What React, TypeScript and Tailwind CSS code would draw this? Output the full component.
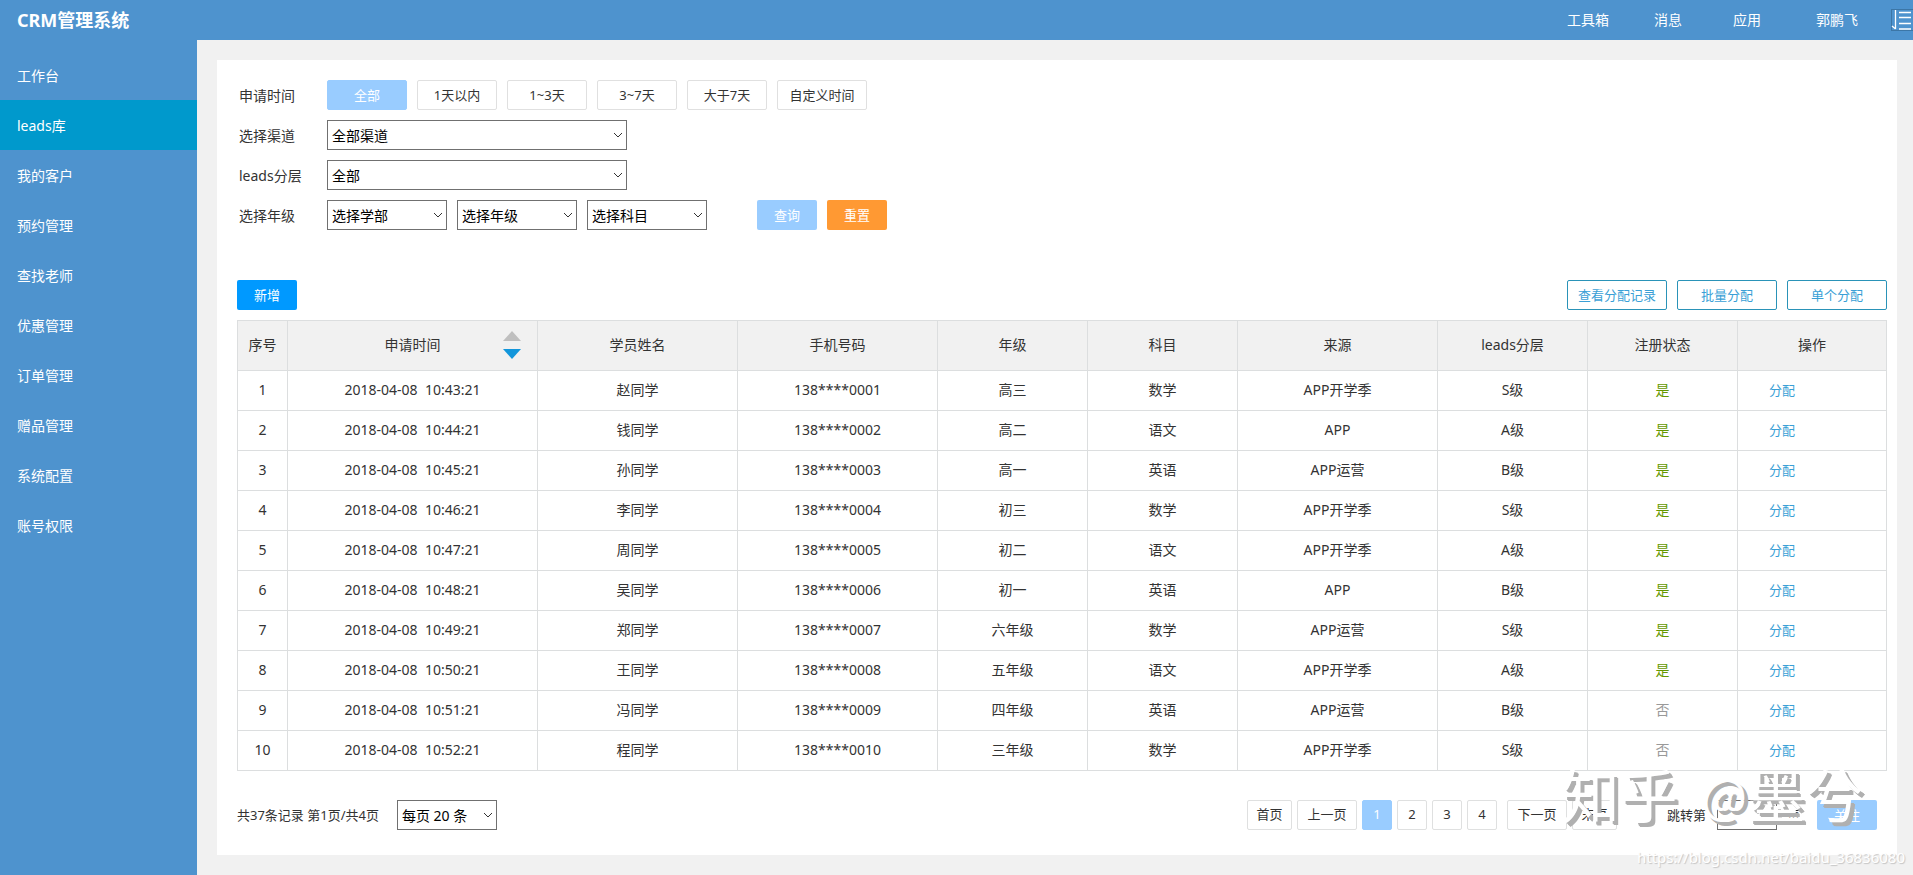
import React, { useState } from "react";

const menu = ["工作台", "leads库", "我的客户", "预约管理", "查找老师", "优惠管理", "订单管理", "赠品管理", "系统配置", "账号权限"];
const ranges = ["全部", "1天以内", "1~3天", "3~7天", "大于7天", "自定义时间"];

const rows = [
  ["10:43:21", "赵同学", "0001", "高三", "数学", "APP开学季", "S级", "是"],
  ["10:44:21", "钱同学", "0002", "高二", "语文", "APP", "A级", "是"],
  ["10:45:21", "孙同学", "0003", "高一", "英语", "APP运营", "B级", "是"],
  ["10:46:21", "李同学", "0004", "初三", "数学", "APP开学季", "S级", "是"],
  ["10:47:21", "周同学", "0005", "初二", "语文", "APP开学季", "A级", "是"],
  ["10:48:21", "吴同学", "0006", "初一", "英语", "APP", "B级", "是"],
  ["10:49:21", "郑同学", "0007", "六年级", "数学", "APP运营", "S级", "是"],
  ["10:50:21", "王同学", "0008", "五年级", "语文", "APP开学季", "A级", "是"],
  ["10:51:21", "冯同学", "0009", "四年级", "英语", "APP运营", "B级", "否"],
  ["10:52:21", "程同学", "0010", "三年级", "数学", "APP开学季", "S级", "否"],
];

function Select({ id, label, options, width }: { id: string; label?: string; options: string[]; width: string }) {
  return (
    <div className={`relative h-[30px] ${width}`}>
      <select
        id={id}
        aria-label={label}
        className="h-full w-full appearance-none border border-[#707070] bg-white pt-0.5 pr-5 pl-1 text-sm text-black"
      >
        {options.map((o) => (
          <option key={o}>{o}</option>
        ))}
      </select>
      <svg
        aria-hidden="true"
        viewBox="0 0 10 6"
        className="pointer-events-none absolute top-3 right-1 h-1.5 w-2.5 fill-none stroke-[#333]"
      >
        <path d="M1 1l4 4 4-4" />
      </svg>
    </div>
  );
}

function OutlineButton({ children }: { children: React.ReactNode }) {
  return (
    <button className="h-[30px] w-[100px] rounded-xs border border-[#2a93b8] bg-white text-[13px] text-[#3a9fd6]">
      {children}
    </button>
  );
}

function PageButton({ children, width, active }: { children: React.ReactNode; width: string; active?: boolean }) {
  return (
    <button
      className={`h-[30px] rounded-xs border pb-0.5 text-[13px] ${width} ${
        active ? "border-[#99ccff] bg-[#99ccff] text-white" : "border-[#dfe0e0] bg-white text-[#333]"
      }`}
    >
      {children}
    </button>
  );
}

const th = "border border-[#dcdedf] p-0 pb-0.5 font-normal";
const td = "border border-[#dcdedf] p-0 pb-0.5 text-center";

export default function App() {
  const [range, setRange] = useState("全部");
  const [page, setPage] = useState("");

  return (
    <div className="relative flex min-h-screen flex-col bg-[#4e93ce] font-['Noto_Sans','Noto_Sans_CJK_SC',sans-serif] text-sm text-[#333]">
      <header className="flex h-10 items-center pl-[17px] text-white">
        <h1 className="text-lg leading-6 font-bold">CRM管理系统</h1>
        <nav className="ml-auto flex items-center">
          <a href="#tools" className="mr-[45px]">工具箱</a>
          <a href="#messages" className="mr-[51px]">消息</a>
          <a href="#apps" className="mr-[55px]">应用</a>
          <a href="#profile">郭鹏飞</a>
        </nav>
        <button aria-label="展开菜单" className="ml-[33px]">
          <svg viewBox="0 0 22 22" className="block h-[22px] w-[22px] fill-none">
            <rect x="0.5" y="0.5" width="22" height="21" stroke="#2b587e" strokeDasharray="1 1" />
            <path d="M4.5 1v19M4.5 20L1 17M8 3.5h12M8 8.5h12M8 14.5h12M8 20h12" stroke="white" strokeWidth="1.3" />
          </svg>
        </button>
      </header>

      <div className="flex flex-1">
        <nav className="w-[197px] shrink-0 pt-2.5">
          {menu.map((m) => (
            <a
              key={m}
              href={`#${m}`}
              className={`flex h-[50px] items-center pt-0.5 pl-[17px] text-white ${m === "leads库" ? "bg-[#0099cc]" : ""}`}
            >
              {m}
            </a>
          ))}
        </nav>

        <main className="flex flex-1 flex-col bg-[#f1f1f1] py-5 pr-4 pl-5">
          <section className="flex-1 bg-white py-5 pr-2.5 pl-5">
            <form className="grid grid-cols-[88px_1fr] items-center gap-y-2.5 pl-0.5" onSubmit={(e) => e.preventDefault()}>
              <span className="pt-0.5">申请时间</span>
              <div className="flex gap-2.5">
                {ranges.map((r) => (
                  <button
                    key={r}
                    type="button"
                    onClick={() => setRange(r)}
                    className={`h-[30px] rounded-xs border text-[13px] ${r === "自定义时间" ? "w-[90px]" : "w-20"} ${
                      r === range ? "border-[#99ccff] bg-[#99ccff] text-white" : "border-[#e0e0e0] bg-white"
                    }`}
                  >
                    {r}
                  </button>
                ))}
              </div>
              <label htmlFor="channel" className="pt-0.5">选择渠道</label>
              <Select id="channel" options={["全部渠道"]} width="w-[300px]" />
              <label htmlFor="level" className="pt-0.5">leads分层</label>
              <Select id="level" options={["全部"]} width="w-[300px]" />
              <label htmlFor="division" className="pt-0.5">选择年级</label>
              <div className="flex gap-2.5">
                <Select id="division" options={["选择学部"]} width="w-[120px]" />
                <Select id="grade" label="选择年级" options={["选择年级"]} width="w-[120px]" />
                <Select id="subject" label="选择科目" options={["选择科目"]} width="w-[120px]" />
                <button className="ml-10 h-[30px] w-[60px] rounded-xs bg-[#99ccff] text-[13px] text-white">查询</button>
                <button type="reset" className="h-[30px] w-[60px] rounded-xs bg-[#ff9933] text-[13px] text-white">
                  重置
                </button>
              </div>
            </form>

            <div className="mt-[50px] flex gap-2.5">
              <button className="mr-auto h-[30px] w-[60px] rounded-xs bg-[#0099ff] text-[13px] text-white">新增</button>
              <OutlineButton>查看分配记录</OutlineButton>
              <OutlineButton>批量分配</OutlineButton>
              <OutlineButton>单个分配</OutlineButton>
            </div>

            <table className="mt-2.5 w-full table-fixed border-collapse">
              <colgroup>
                <col className="w-[50px]" />
                <col className="w-[250px]" />
                <col className="w-[200px]" />
                <col className="w-[200px]" />
                <col className="w-[150px]" />
                <col className="w-[150px]" />
                <col className="w-[200px]" />
                <col className="w-[150px]" />
                <col className="w-[150px]" />
                <col className="w-[149px]" />
              </colgroup>
              <thead>
                <tr className="h-[50px] bg-[#f1f1f1]">
                  <th className={th}>序号</th>
                  <th className={th}>
                    <div className="grid grid-cols-[1fr_auto_1fr] items-center">
                      <span className="col-start-2">申请时间</span>
                      <button aria-label="排序" className="mr-4 justify-self-end">
                        <svg viewBox="0 0 18 28" className="block h-7 w-[18px]">
                          <path d="M9 0l9 10H0z" fill="#bfbfbf" />
                          <path d="M9 28l9-10H0z" fill="#1296db" />
                        </svg>
                      </button>
                    </div>
                  </th>
                  {["学员姓名", "手机号码", "年级", "科目", "来源", "leads分层", "注册状态", "操作"].map((h) => (
                    <th key={h} className={th}>
                      {h}
                    </th>
                  ))}
                </tr>
              </thead>
              <tbody>
                {rows.map(([time, name, phone, grade, subject, source, level, status], i) => (
                  <tr key={phone} className="h-10">
                    <td className={td}>{i + 1}</td>
                    <td className={`${td} whitespace-pre`}>{`2018-04-08  ${time}`}</td>
                    <td className={td}>{name}</td>
                    <td className={td}>138****{phone}</td>
                    <td className={td}>{grade}</td>
                    <td className={td}>{subject}</td>
                    <td className={td}>{source}</td>
                    <td className={td}>{level}</td>
                    <td className={`${td} ${status === "是" ? "text-[#669900]" : "text-[#999]"}`}>{status}</td>
                    <td className="border border-[#dcdedf] p-0 pl-[31px] text-[13px]">
                      <a href={`#assign-${phone}`} className="text-[#3a9fd6]">
                        分配
                      </a>
                    </td>
                  </tr>
                ))}
              </tbody>
            </table>

            <div className="mt-[29px] flex items-center text-[13px]">
              <span className="mr-[18px]">共37条记录 第1页/共4页</span>
              <Select id="size" label="每页条数" options={["每页 20 条"]} width="w-[100px]" />
              <div className="ml-auto flex gap-[5px]">
                <PageButton width="w-[45px]">首页</PageButton>
                <PageButton width="w-[60px]">上一页</PageButton>
                <PageButton width="w-[30px]" active>1</PageButton>
                <PageButton width="w-[30px]">2</PageButton>
                <PageButton width="w-[30px]">3</PageButton>
                <PageButton width="w-[30px]">4</PageButton>
                <div className="flex gap-[5px] pl-[5px]">
                  <PageButton width="w-[60px]">下一页</PageButton>
                  <PageButton width="w-[45px]">末页</PageButton>
                </div>
              </div>
              <label htmlFor="jump" className="ml-[50px]">
                跳转第
              </label>
              <input
                id="jump"
                value={page}
                onChange={(e) => setPage(e.target.value)}
                className="mr-2.5 ml-[11px] h-[30px] w-[60px] border border-[#707070] px-1"
              />
              <span>页</span>
              <button className="mr-2.5 ml-[17px] h-[30px] w-[60px] rounded-xs bg-[#99ccff] text-white">关注</button>
            </div>
          </section>
        </main>
      </div>

      <div className="pointer-events-none absolute right-[50px] bottom-[46px] flex items-center font-['Noto_Sans_CJK_SC',sans-serif] text-[58px] leading-[72px] whitespace-nowrap text-white [text-shadow:3px_3px_0_#b0b0b0,4px_4px_0_#b0b0b0]">
        <span className="mr-6">知乎</span>
        <span className="text-5xl leading-[72px]">@</span>
        <span>墨兮</span>
      </div>
      <div className="pointer-events-none absolute right-2 bottom-2 text-[15px] leading-5 text-white [text-shadow:1px_1px_1px_#c4c4c4]">
        https://blog.csdn.net/baidu_36836080
      </div>
    </div>
  );
}
